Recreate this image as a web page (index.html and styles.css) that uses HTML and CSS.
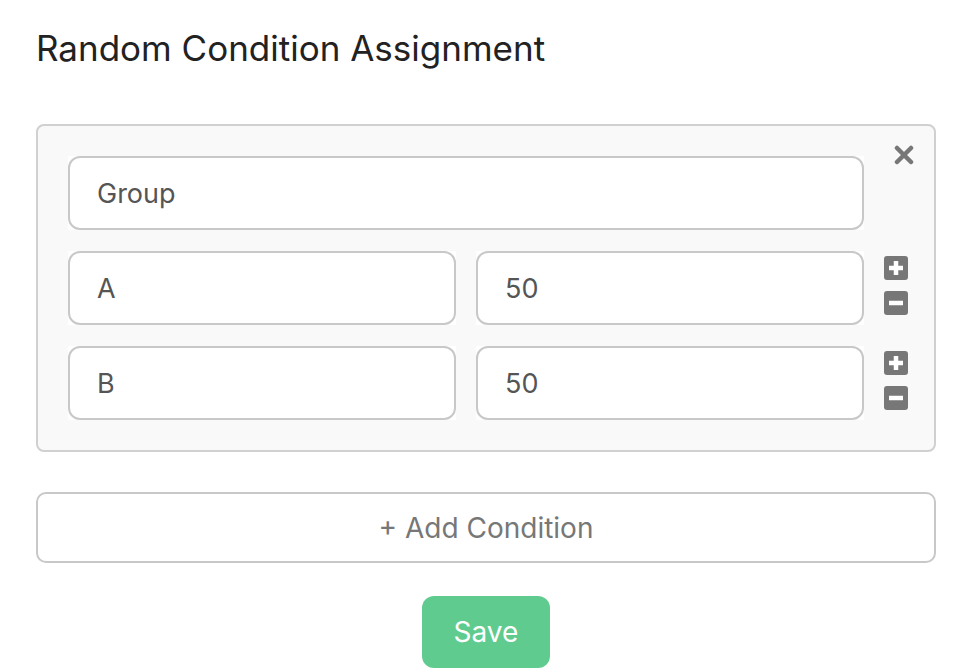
FILE: index.html
```html
<!DOCTYPE html>
<html>
<head>
<meta charset="utf-8">
<link rel="stylesheet" href="styles.css">
</head>
<body>
<div class="page">
  <h1 class="title">Random Condition Assignment</h1>
  <div class="panel">
    <button class="close" aria-label="Remove">
      <svg width="20" height="20" viewBox="0 0 20 20"><path d="M3 3 L17 17 M17 3 L3 17" stroke="#777" stroke-width="4.5" stroke-linecap="round"/></svg>
    </button>
    <div class="row">
      <div class="field"><input class="input" value="Group"></div>
      <div class="spacer"></div>
    </div>
    <div class="row">
      <div class="field"><input class="input" value="A"></div>
      <div class="field"><input class="input" value="50"></div>
      <div class="tools">
        <span class="tool"><svg width="24" height="24" viewBox="0 0 24 24"><rect x="0" y="0" width="24" height="24" rx="3" fill="#777"/><path d="M12 5 V19 M5 12 H19" stroke="#fff" stroke-width="4.5"/></svg></span>
        <span class="tool"><svg width="24" height="24" viewBox="0 0 24 24"><rect x="0" y="0" width="24" height="24" rx="3" fill="#777"/><path d="M5 12 H19" stroke="#fff" stroke-width="4.5"/></svg></span>
      </div>
    </div>
    <div class="row">
      <div class="field"><input class="input" value="B"></div>
      <div class="field"><input class="input" value="50"></div>
      <div class="tools">
        <span class="tool"><svg width="24" height="24" viewBox="0 0 24 24"><rect x="0" y="0" width="24" height="24" rx="3" fill="#777"/><path d="M12 5 V19 M5 12 H19" stroke="#fff" stroke-width="4.5"/></svg></span>
        <span class="tool"><svg width="24" height="24" viewBox="0 0 24 24"><rect x="0" y="0" width="24" height="24" rx="3" fill="#777"/><path d="M5 12 H19" stroke="#fff" stroke-width="4.5"/></svg></span>
      </div>
    </div>
  </div>
  <button class="add">+ Add Condition</button>
  <div class="actions"><button class="save">Save</button></div>
</div>
</body>
</html>
```

FILE: styles.css
```css
* { box-sizing: border-box; }
html, body { margin: 0; padding: 0; background: #fff; }
body { font-family: Inter, "Noto Sans", sans-serif; color: #222; }
.page { width: 900px; margin-left: 36px; padding-top: 26px; }
.title { font-size: 35px; font-weight: 400; line-height: 44px; margin: 0 0 54px 0; color: #222; }
.panel { position: relative; background: #f9f9f9; border: 2px solid #d0d0d0; border-radius: 8px; padding: 30px 26px 30px 30px; display: flex; flex-direction: column; gap: 21px; }
.close { position: absolute; top: 19px; right: 20px; width: 20px; height: 20px; padding: 0; border: 0; background: none; display: flex; }
.row { display: flex; gap: 20px; align-items: center; }
.field { flex: 1; background: #fff; height: 74px; }
.spacer { width: 24px; flex: none; }
.input { width: 100%; height: 100%; border: 2px solid #c8c8c8; border-radius: 12px; background: #fff; padding: 0 27px; font-family: Inter, "Noto Sans", sans-serif; font-size: 27px; color: #555; outline: none; }
.tools { width: 24px; flex: none; display: flex; flex-direction: column; gap: 11px; margin-bottom: 5px; }
.tool { display: block; width: 24px; height: 24px; }
.tool svg { display: block; }
.add { display: block; width: 100%; margin-top: 40px; height: 71px; background: #fff; border: 2px solid #c8c8c8; border-radius: 10px; font-family: Inter, "Noto Sans", sans-serif; font-size: 28px; color: #777; padding: 0; }
.actions { display: flex; justify-content: center; margin-top: 33px; }
.save { width: 128px; height: 72px; border: 0; border-radius: 12px; background: #5fcb8e; color: #fff; font-family: Inter, "Noto Sans", sans-serif; font-size: 28px; padding: 0; }
```
